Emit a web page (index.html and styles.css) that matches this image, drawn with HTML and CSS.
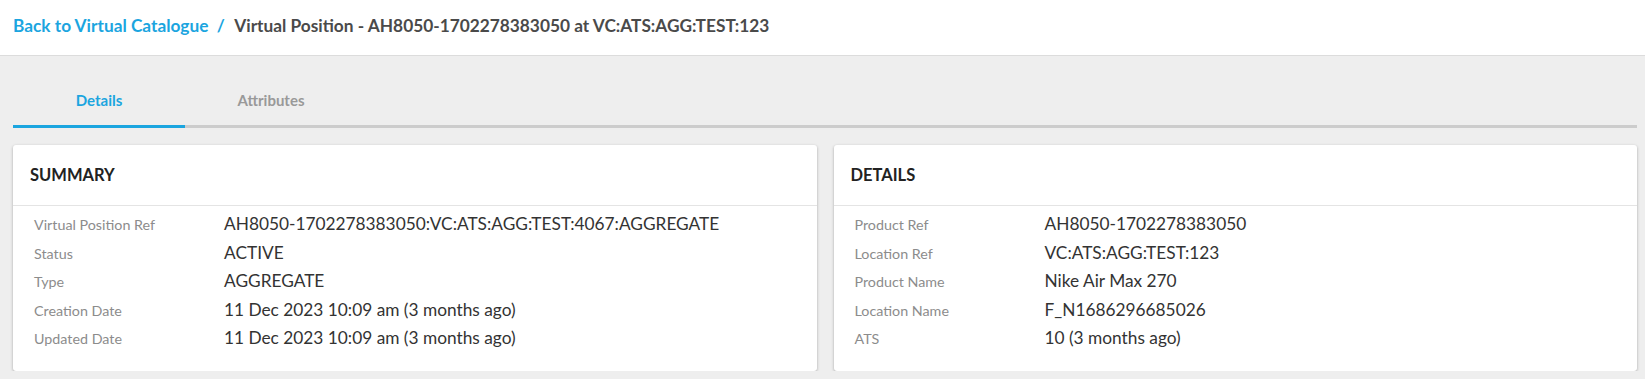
FILE: index.html
```html
<!DOCTYPE html>
<html>
<head>
    <title>Virtual Position</title>
    <link rel="stylesheet" href="styles.css">
</head>
<body>
    <div class="topbar">
        <a class="crumb-link" href="#">Back to Virtual Catalogue</a>
        <span class="crumb-sep">/</span>
        <span class="crumb-title">Virtual Position - AH8050-1702278383050 at VC:ATS:AGG:TEST:123</span>
    </div>

    <div class="content">
        <div class="tabs">
            <div class="tab active">Details</div>
            <div class="tab">Attributes</div>
        </div>

        <div class="cards">
            <div class="card">
                <div class="card-header">SUMMARY</div>
                <div class="card-body">
                    <div class="row"><span class="label">Virtual Position Ref</span><span class="value">AH8050-1702278383050:VC:ATS:AGG:TEST:4067:AGGREGATE</span></div>
                    <div class="row"><span class="label">Status</span><span class="value">ACTIVE</span></div>
                    <div class="row"><span class="label">Type</span><span class="value">AGGREGATE</span></div>
                    <div class="row"><span class="label">Creation Date</span><span class="value">11 Dec 2023 10:09 am (3 months ago)</span></div>
                    <div class="row"><span class="label">Updated Date</span><span class="value">11 Dec 2023 10:09 am (3 months ago)</span></div>
                </div>
            </div>

            <div class="card">
                <div class="card-header">DETAILS</div>
                <div class="card-body">
                    <div class="row"><span class="label">Product Ref</span><span class="value">AH8050-1702278383050</span></div>
                    <div class="row"><span class="label">Location Ref</span><span class="value">VC:ATS:AGG:TEST:123</span></div>
                    <div class="row"><span class="label">Product Name</span><span class="value">Nike Air Max 270</span></div>
                    <div class="row"><span class="label">Location Name</span><span class="value">F_N1686296685026</span></div>
                    <div class="row"><span class="label">ATS</span><span class="value">10 (3 months ago)</span></div>
                </div>
            </div>
        </div>
    </div>
</body>
</html>
```

FILE: styles.css
```css
body {
    margin: 0;
    background-color: #eeeeee;
    font-family: Lato, "Open Sans", sans-serif;
    color: #333;
}
.topbar {
    background-color: #fff;
    height: 52px;
    line-height: 51px;
    padding: 0 0 3px 13px;
    border-bottom: 1px solid #dcdcdc;
    font-size: 17.3px;
    font-weight: bold;
}
.crumb-link {
    color: #1ba5df;
    text-decoration: none;
}
.crumb-sep {
    color: #1ba5df;
    margin: 0 6px 0 4px;
}
.crumb-title {
    color: #4a4a4a;
}
.content {
    padding: 0 8px 0 13px;
}
.tabs {
    display: flex;
    border-bottom: 3px solid #cccccc;
}
.tab {
    width: 172px;
    text-align: center;
    padding: 34px 0 15px;
    line-height: 20px;
    font-size: 15px;
    font-weight: bold;
    color: #999;
    margin-bottom: -3px;
    border-bottom: 3px solid transparent;
}
.tab.active {
    color: #1ba5df;
    border-bottom-color: #1ba5df;
}
.cards {
    display: grid;
    grid-template-columns: 1fr 1fr;
    gap: 17px;
    margin-top: 17px;
}
.card {
    background-color: #fff;
    border-radius: 3px;
    box-shadow: 0 1px 3px rgba(0, 0, 0, 0.3);
}
.card-header {
    padding: 20px 17px 20px;
    line-height: 20px;
    font-size: 16.5px;
    font-weight: bold;
    color: #222;
    border-bottom: 1px solid #e4e4e4;
}
.card-body {
    padding: 4px 21px 18px;
}
.row {
    display: flex;
    align-items: baseline;
    height: 28.5px;
    line-height: 28.5px;
}
.label {
    width: 190px;
    flex-shrink: 0;
    font-size: 14.3px;
    color: #8c8c8c;
}
.value {
    font-size: 17.3px;
    color: #333;
}
```
